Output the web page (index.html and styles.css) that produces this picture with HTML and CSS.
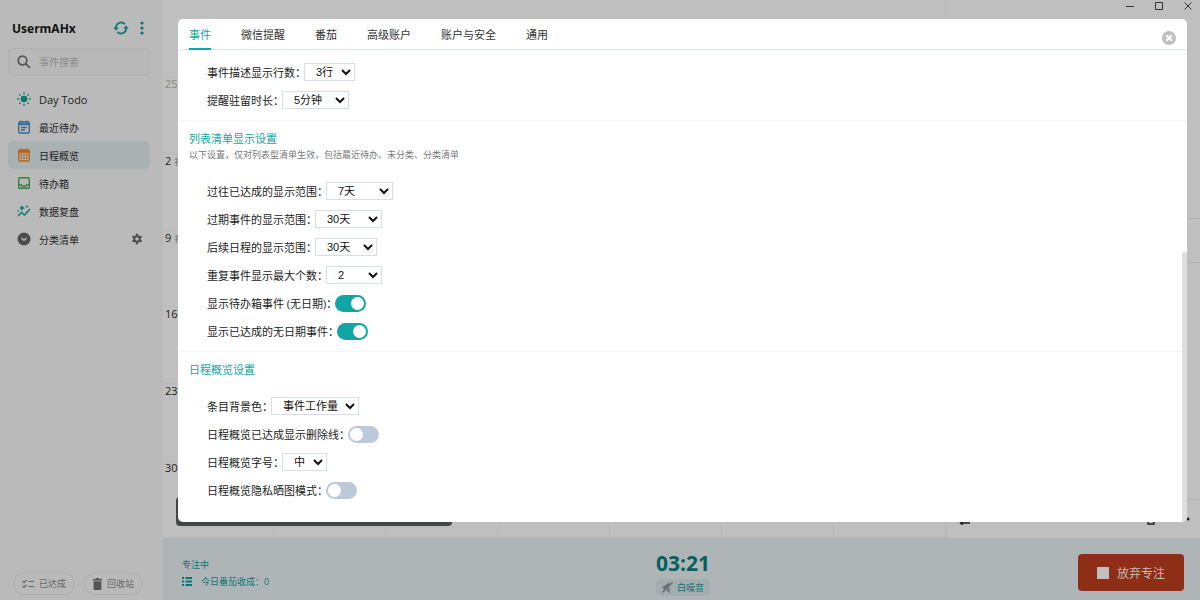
FILE: index.html
```
<!DOCTYPE html>
<html lang="zh-CN">
<head>
    <meta charset="UTF-8">
    <meta name="viewport" content="width=device-width, initial-scale=1.0">
    <title>Day Todo</title>
    <link rel="stylesheet" href="styles.css">
</head>
<body>
    <div class="app">
        <aside class="sidebar">
            <div class="user">
                <h1>UsermAHx</h1>
                <button class="icon-btn" aria-label="同步">
                    <svg width="16" height="16" viewBox="0 0 16 16" fill="none" stroke="#0a7572" stroke-width="1.7">
                        <path d="M3 8A5 5 0 0 1 11.800 4.300M13 8A5 5 0 0 1 4.200 11.700"/>
                        <path d="M.3 7.600h5.400L3 10.600zM10.300 8.400h5.400L13 5.400z" fill="#0a7572" stroke="none"/>
                    </svg>
                </button>
                <button class="icon-btn" aria-label="更多">
                    <svg width="4" height="14" viewBox="0 0 4 14" fill="#0a7572"><circle cx="2" cy="2" r="1.600"/><circle cx="2" cy="7" r="1.600"/><circle cx="2" cy="12" r="1.600"/></svg>
                </button>
            </div>
            <label class="search">
                <svg width="14" height="14" viewBox="0 0 14 14" fill="none" stroke="#555" stroke-width="1.700"><circle cx="5.500" cy="5.500" r="4.300"/><path d="M8.700 8.700l4.300 4.300"/></svg>
                <input type="text" placeholder="事件搜索" aria-label="事件搜索">
            </label>
            <nav class="menu">
                <a href="#">
                    <svg width="14" height="14" viewBox="0 0 14 14" stroke="#0a7572" stroke-width="1.400"><circle cx="7" cy="7" r="2.600" fill="#0a7572"/><path d="M7 .3v1.900M7 11.800v1.900M.3 7h1.900M11.800 7h1.900M2.300 2.300l1.200 1.200M10.500 10.500l1.200 1.200M2.300 11.700l1.200-1.200M10.500 3.500l1.200-1.200"/></svg>
                    <span class="latin">Day Todo</span>
                </a>
                <a href="#">
                    <svg width="14" height="14" viewBox="0 0 14 14" fill="none" stroke="#2f6a92" stroke-width="1.300"><rect x="1.700" y="2" width="10.600" height="11" rx="1"/><path d="M1.700 4.200h10.600" stroke-width="2"/><path d="M4 .4v2M10 .4v2M4 7.500h6M4 10h4"/></svg>
                    <span>最近待办</span>
                </a>
                <a href="#" class="active">
                    <svg width="14" height="14" viewBox="0 0 14 14" fill="none" stroke="#b8641c" stroke-width="1.300"><rect x="1.700" y="2" width="10.600" height="11" rx="1"/><path d="M4 .4v2M10 .4v2M2 4.800h10"/><path d="M1.700 3.200h10.600" stroke-width="1.800"/><path d="M3.500 7.300h1.700M6.200 7.300h1.700M8.900 7.300h1.700M3.500 10.200h1.700M6.200 10.200h1.700M8.900 10.200h1.700" stroke-width="1.700"/></svg>
                    <span>日程概览</span>
                </a>
                <a href="#">
                    <svg width="14" height="14" viewBox="0 0 14 14" fill="none" stroke="#3b7a3e" stroke-width="1.400"><rect x="1.700" y="1.700" width="10.600" height="10.600" rx="1"/><path d="M1.700 9h3c.4 2 4.200 2 4.600 0h3"/></svg>
                    <span>待办箱</span>
                </a>
                <a href="#">
                    <svg width="14" height="14" viewBox="0 0 14 14" fill="none" stroke="#0a7572" stroke-width="1.300"><path d="M1 12l3.500-3.500L7.500 11 13 5"/><path d="M5 1l.9 2.100L8 4l-2.100.9L5 7l-.9-2.100L2 4l2.100-.9zM10 .8l.5 1.200 1.200.5-1.200.5-.5 1.200-.5-1.200-1.200-.5 1.200-.5zM1.300 5.500l.4 1 1 .4-1 .4-.4 1-.4-1-1-.4 1-.4z" fill="#0a7572" stroke="none"/></svg>
                    <span>数据复盘</span>
                </a>
                <a href="#">
                    <svg width="14" height="14" viewBox="0 0 14 14"><circle cx="7" cy="7" r="6.500" fill="#4c4c4c"/><path d="M4.500 6L7 8.400 9.500 6" fill="none" stroke="#bababa" stroke-width="1.400"/></svg>
                    <span>分类清单</span>
                    <svg class="gear" width="12" height="12" viewBox="0 0 12 12" fill="none" stroke="#4c4c4c"><circle cx="6" cy="6" r="2.800" stroke-width="2"/><path d="M6 .8v2M6 9.200v2M1.500 3.400l1.700 1M8.800 7.600l1.700 1M1.500 8.600l1.700-1M8.800 4.400l1.700-1" stroke-width="2.200"/></svg>
                </a>
            </nav>
            <div class="side-foot">
                <button class="pill">
                    <svg width="12" height="10" viewBox="0 0 12 10" fill="none" stroke="#666" stroke-width="1.200"><path d="M.5 2.200l1.500 1.500L4.500 1M.5 7l1.500 1.500L4.500 6M6.500 2.500H12M6.500 7.500H12"/></svg>
                    已达成
                </button>
                <button class="pill">
                    <svg width="9" height="12" viewBox="0 0 9 12" fill="#555"><path d="M0 1h2.500l.7-1h2.600l.7 1H9v1.400H0zM.6 3.200h7.800V11a1 1 0 0 1-1 1H1.600a1 1 0 0 1-1-1z"/></svg>
                    回收站
                </button>
            </div>
        </aside>

        <main class="main">
            <div class="window-bar">
                <button class="icon-btn" aria-label="最小化"><svg width="10" height="10" viewBox="0 0 10 10" stroke="#333"><path d="M1 4.500h8"/></svg></button>
                <button class="icon-btn" aria-label="最大化"><svg width="10" height="10" viewBox="0 0 10 10" stroke="#333" fill="none"><path d="M1.500 .5h7v7h-7z"/></svg></button>
                <button class="icon-btn" aria-label="关闭"><svg width="10" height="10" viewBox="0 0 10 10" stroke="#333"><path d="M1.500 .5l7 7M8.500 .5l-7 7"/></svg></button>
            </div>
            <div class="board">
                <div class="calendar">
                    <div class="week-head"></div>
                    <div class="week"><div class="day muted">25</div><div class="day"></div><div class="day"></div><div class="day"></div><div class="day"></div><div class="day"></div><div class="day"></div></div>
                    <div class="week"><div class="day">2 <small>初</small></div><div class="day"></div><div class="day"></div><div class="day"></div><div class="day"></div><div class="day"></div><div class="day"></div></div>
                    <div class="week"><div class="day">9 <small>初</small></div><div class="day"></div><div class="day"></div><div class="day"></div><div class="day"></div><div class="day"></div><div class="day"></div></div>
                    <div class="week"><div class="day">16</div><div class="day"></div><div class="day"></div><div class="day"></div><div class="day"></div><div class="day"></div><div class="day"></div></div>
                    <div class="week"><div class="day">23</div><div class="day"></div><div class="day"></div><div class="day"></div><div class="day"></div><div class="day"></div><div class="day"></div></div>
                    <div class="week"><div class="day">30</div><div class="day"></div><div class="day"></div><div class="day"></div><div class="day"></div><div class="day"></div><div class="day"></div></div>
                </div>
                <div class="detail">
                    <div class="detail-top"></div>
                    <div class="detail-mid"></div>
                    <div class="detail-list"></div>
                    <div class="detail-tools">
                        <svg width="12" height="12" viewBox="0 0 12 12" fill="none" stroke="#222" stroke-width="1.500"><path d="M1 3h9M2 10h9M4 8l-2.500 2L4 12"/></svg>
                        <svg class="push" width="10" height="12" viewBox="0 0 10 12" fill="none" stroke="#222" stroke-width="1.500"><path d="M0 2h10M2 2v9h6V2"/></svg>
                        <svg width="4" height="4" viewBox="0 0 4 4" fill="#222"><circle cx="2" cy="2" r="1.500"/></svg>
                    </div>
                </div>
            </div>
            <footer class="focus">
                <div class="focus-info">
                    <div>专注中</div>
                    <div class="harvest">
                        <svg width="10" height="9" viewBox="0 0 10 9" fill="#0a7572"><path d="M0 0h2v2H0zM3.500 0H10v2H3.500zM0 3.500h2v2H0zM3.500 3.500H10v2H3.500zM0 7h2v2H0zM3.500 7H10v2H3.500z"/></svg>
                        今日番茄收成：0
                    </div>
                </div>
                <div class="timer">
                    <div class="clock">03:21</div>
                    <button class="noise">
                        <svg width="11" height="11" viewBox="0 0 11 11" fill="#6b6f70"><path d="M0 5l3-1.500L7.500 0v11L4.800 8.500 2.500 8z"/><path d="M.5 10.500l10-10" stroke="#6b6f70" stroke-width="1.600"/><path d="M1.500 11L11 1.500" stroke="#a5afb1" stroke-width=".8"/></svg>
                        白噪音
                    </button>
                </div>
                <button class="give-up"><span class="stop"></span>放弃专注</button>
            </footer>
        </main>
    </div>

    <div class="toast"></div>
    <section class="modal" role="dialog" aria-label="设置">
        <header class="tabs">
            <a href="#" class="current">事件</a>
            <a href="#">微信提醒</a>
            <a href="#">番茄</a>
            <a href="#">高级账户</a>
            <a href="#">账户与安全</a>
            <a href="#">通用</a>
            <button class="icon-btn close" aria-label="关闭设置">
                <svg width="14" height="14" viewBox="0 0 14 14"><circle cx="7" cy="7" r="7" fill="#bfbfbf"/><path d="M4.200 4.200l5.600 5.600M9.800 4.200L4.200 9.800" stroke="#fff" stroke-width="2"/></svg>
            </button>
        </header>
        <div class="modal-body">
            <div class="group">
                <div class="row"><label for="lines">事件描述显示行数：</label><select id="lines" class="w-xs"><option>3行</option></select></div>
                <div class="row"><label for="stay">提醒驻留时长：</label><select id="stay" class="w-lg"><option>5分钟</option></select></div>
            </div>
            <div class="group">
                <h2>列表清单显示设置</h2>
                <p>以下设置，仅对列表型清单生效，包括最近待办、未分类、分类清单</p>
                <div class="row"><label for="done-range">过往已达成的显示范围：</label><select id="done-range" class="w-lg"><option>7天</option></select></div>
                <div class="row"><label for="overdue">过期事件的显示范围：</label><select id="overdue" class="w-lg"><option>30天</option></select></div>
                <div class="row"><label for="future">后续日程的显示范围：</label><select id="future" class="w-md"><option>30天</option></select></div>
                <div class="row"><label for="repeat">重复事件显示最大个数：</label><select id="repeat" class="w-sm"><option>2</option></select></div>
                <div class="row"><label for="inbox">显示待办箱事件 (无日期)：</label><input type="checkbox" class="switch" id="inbox" checked></div>
                <div class="row"><label for="undated">显示已达成的无日期事件：</label><input type="checkbox" class="switch" id="undated" checked></div>
            </div>
            <div class="group">
                <h2>日程概览设置</h2>
                <div class="row first"><label for="bg">条目背景色：</label><select id="bg" class="w-xl"><option>事件工作量</option></select></div>
                <div class="row"><label for="strike">日程概览已达成显示删除线：</label><input type="checkbox" class="switch" id="strike"></div>
                <div class="row"><label for="size">日程概览字号：</label><select id="size" class="w-xxs"><option>中</option></select></div>
                <div class="row"><label for="privacy">日程概览隐私晒图模式：</label><input type="checkbox" class="switch" id="privacy"></div>
            </div>
            <div class="scrollbar"></div>
        </div>
    </section>
</body>
</html>
```
FILE: styles.css
```
*{
    box-sizing: border-box;
    margin: 0;
    padding: 0;
}
body{
    font-family: "Open Sans", "Noto Sans CJK SC", sans-serif;
    font-size: 11px;
    color: #222;
    background: #bfbfbf;
}
a{
    color: inherit;
    text-decoration: none;
}
button{
    font: inherit;
    color: inherit;
    border: none;
    background: none;
    cursor: pointer;
}
svg{
    display: block;
    flex: none;
}
.icon-btn{
    display: flex;
}
.app{
    display: flex;
    height: 100vh;
    overflow: hidden;
}

/* sidebar */
.sidebar{
    display: flex;
    flex-direction: column;
    width: 163px;
    flex: none;
    padding: 18px 13px 5px 8px;
    background: #bababa;
}
.user{
    display: flex;
    align-items: center;
    gap: 11px;
    height: 20px;
    padding: 0 6px 0 4px;
}
.user h1{
    flex: 1;
    font-size: 12px;
    color: #111;
}
.search{
    display: flex;
    align-items: center;
    gap: 8px;
    height: 28px;
    margin-top: 10px;
    padding: 0 8px;
    border: 1px solid #b2b2b2;
    border-radius: 5px;
    background: #b8b8b8;
}
.search input{
    width: 100%;
    border: none;
    outline: none;
    background: none;
    font: inherit;
    font-size: 10px;
}
.search input::placeholder{
    color: #8c8c8c;
}
.menu{
    margin-top: 9px;
    font-size: 10px;
}
.menu a{
    display: flex;
    align-items: center;
    gap: 8px;
    height: 28px;
    padding: 0 7px 0 9px;
    border-radius: 5px;
}
.menu .latin{
    font-size: 11px;
}
.menu .active{
    background: #aab1b2;
}
.gear{
    margin-left: auto;
}
.side-foot{
    display: flex;
    gap: 9px;
    margin-top: auto;
    padding-left: 5px;
}
.pill{
    display: flex;
    align-items: center;
    gap: 5px;
    height: 23px;
    padding: 0 8px;
    border: 1px solid #b0b0b0;
    border-radius: 12px;
    font-size: 9px;
    color: #666;
}

/* main area */
.main{
    flex: 1;
    display: flex;
    flex-direction: column;
    min-width: 0;
    position: relative;
}
.window-bar{
    position: absolute;
    top: 2px;
    right: 7px;
    display: flex;
    gap: 19px;
}
.board{
    flex: 1;
    display: flex;
}
.calendar{
    flex: 1;
    display: flex;
    flex-direction: column;
    border-right: 1px solid #b8b8b8;
}
.week-head{
    height: 77px;
    border-bottom: 1px solid #b8b8b8;
}
.week{
    flex: 1;
    display: flex;
    border-bottom: 1px solid #b8b8b8;
}
.day{
    flex: 1;
    padding-left: 2px;
    border-right: 1px solid #b8b8b8;
    font-size: 11px;
    line-height: 14px;
    white-space: nowrap;
}
.day small{
    font-size: 9px;
    color: #777;
}
.muted{
    color: #888;
}
.detail{
    display: flex;
    flex-direction: column;
    width: 253px;
}
.detail-top{
    height: 219px;
    border-bottom: 1px solid #b2b2b2;
}
.detail-mid{
    height: 44px;
    border-bottom: 1px solid #b2b2b2;
}
.detail-list{
    flex: 1;
    border-bottom: 1px solid #b2b2b2;
}
.detail-tools{
    display: flex;
    align-items: center;
    gap: 30px;
    height: 38px;
    padding: 0 10px 0 12px;
}
.push{
    margin-left: auto;
}

/* focus bar */
.focus{
    display: grid;
    grid-template-columns: 1fr auto 1fr;
    align-items: center;
    height: 62px;
    padding: 7px 16px 0 19px;
    background: #afb5b6;
    color: #0a7572;
}
.focus-info{
    font-size: 9px;
    line-height: 17px;
}
.harvest{
    display: flex;
    align-items: center;
    gap: 9px;
}
.timer{
    display: flex;
    flex-direction: column;
    align-items: center;
}
.clock{
    font-size: 21px;
    line-height: 26px;
    font-weight: bold;
    color: #04615e;
}
.noise{
    display: flex;
    align-items: center;
    gap: 4px;
    height: 17px;
    margin-top: 3px;
    padding: 0 6px;
    border-radius: 4px;
    background: #a3adaf;
    font-size: 9px;
}
.give-up{
    display: flex;
    align-items: center;
    justify-content: center;
    justify-self: end;
    gap: 8px;
    width: 106px;
    height: 37px;
    border-radius: 4px;
    background: #8e2e16;
    font-size: 12px;
    color: #c4bcb9;
}
.stop{
    width: 12px;
    height: 12px;
    background: #bfbfbf;
}

/* settings window, lies over the app */
.toast{
    position: absolute;
    left: 176px;
    bottom: 74px;
    width: 276px;
    height: 29px;
    border-radius: 4px;
    background: #444746;
}
.modal{
    position: absolute;
    top: 19px;
    right: 13px;
    bottom: 78px;
    left: 178px;
    display: flex;
    flex-direction: column;
    overflow: hidden;
    border-radius: 5px;
    background: #fff;
}
.tabs{
    display: flex;
    gap: 30px;
    height: 31px;
    flex: none;
    padding: 0 11px;
    border-bottom: 1px solid #dfe7ee;
    line-height: 32px;
    color: #333;
}
.tabs .current{
    height: 31px;
    border-bottom: 2px solid #12a5a5;
    color: #12a5a5;
}
.close{
    align-items: center;
    margin-left: auto;
    padding-top: 8px;
}
.modal-body{
    position: relative;
    flex: 1;
}
.group{
    padding: 10px 11px 6px;
    border-bottom: 1px solid #f2f4f5;
}
.group:first-child{
    padding-top: 8px;
}
.group:nth-child(3){
    border-bottom: none;
}
.group h2{
    font-size: 11px;
    line-height: 15px;
    font-weight: normal;
    color: #12a5a5;
}
.group p{
    margin-bottom: 14px;
    font-size: 9px;
    line-height: 17px;
    color: #777;
}
.row{
    display: flex;
    align-items: center;
    height: 28px;
    padding-left: 18px;
}
.first{
    margin-top: 15px;
}
select{
    height: 18px;
    margin-left: -2px;
    padding-left: 7px;
    border: 1px solid #d5dfea;
    background: #fff;
    font-family: "Liberation Sans", "Noto Sans CJK SC", sans-serif;
    font-size: 11px;
    color: #111;
}
.w-xxs{ width: 45px; }
.w-xs{ width: 51px; }
.w-sm{ width: 56px; }
.w-md{ width: 62px; }
.w-lg{ width: 67px; }
.w-xl{ width: 88px; }
.switch{
    appearance: none;
    width: 31px;
    height: 17px;
    margin-left: -2px;
    padding: 2px;
    border-radius: 9px;
    background: #bdc9d9;
}
.switch::before{
    content: "";
    display: block;
    width: 13px;
    height: 13px;
    border-radius: 50%;
    background: #fff;
}
.switch:checked{
    background: #12a5a5;
}
.switch:checked::before{
    margin-left: auto;
}
.scrollbar{
    position: absolute;
    top: 202px;
    right: 0;
    bottom: 0;
    width: 5px;
    border-radius: 3px 3px 0 0;
    background: #dcdfe2;
}
```
